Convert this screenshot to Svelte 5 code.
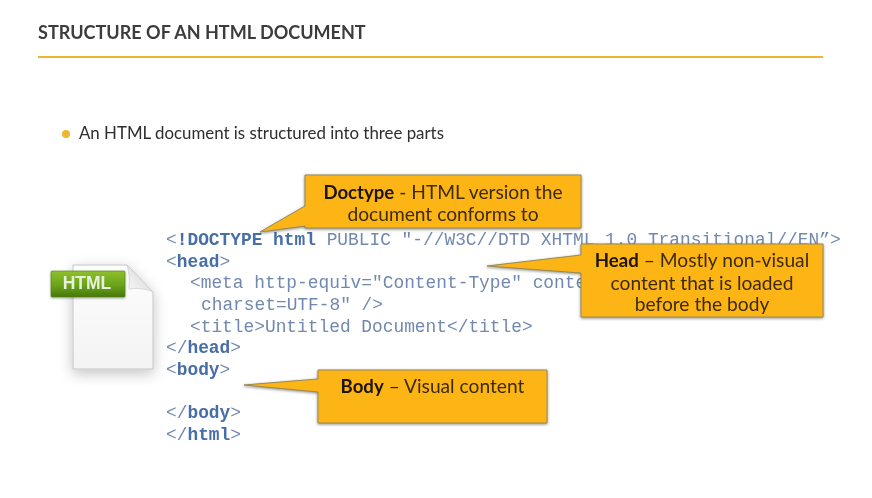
<script>
  const lines = [
    { indent: 0, parts: [['&lt;'], ['!DOCTYPE html', 1], [' PUBLIC "-//W3C//DTD XHTML 1.0 Transitional//EN”&gt;']] },
    { indent: 0, parts: [['&lt;'], ['head', 1], ['&gt;']] },
    { indent: 1, parts: [['&lt;meta http-equiv="Content-Type" content="text/html;']] },
    { indent: 2, parts: [['charset=UTF-8" /&gt;']] },
    { indent: 1, parts: [['&lt;title&gt;Untitled Document&lt;/title&gt;']] },
    { indent: 0, parts: [['&lt;/'], ['head', 1], ['&gt;']] },
    { indent: 0, parts: [['&lt;'], ['body', 1], ['&gt;']] },
    { indent: 0, parts: [[' ']] },
    { indent: 0, parts: [['&lt;/'], ['body', 1], ['&gt;']] },
    { indent: 0, parts: [['&lt;/'], ['html', 1], ['&gt;']] }
  ];
</script>

<div class="slide">
  <header class="head"><h1>STRUCTURE OF AN HTML DOCUMENT</h1></header>
  <ul class="bullets"><li>An HTML document is structured into three parts</li></ul>

  <section class="figure">
    <div class="file">
      <svg width="130" height="135" viewBox="0 0 130 135" aria-hidden="true">
        <defs>
          <linearGradient id="pg" x1="0" y1="0" x2="0" y2="1"><stop offset="0" stop-color="#fdfdfd"/><stop offset="1" stop-color="#f3f3f3"/></linearGradient>
          <linearGradient id="fold" x1="0" y1="1" x2="1" y2="0"><stop offset="0" stop-color="#fafafa"/><stop offset="1" stop-color="#cfcfcf"/></linearGradient>
          <linearGradient id="tag" x1="0" y1="0" x2="0" y2="1"><stop offset="0" stop-color="#8fc02c"/><stop offset=".55" stop-color="#6aa31a"/><stop offset="1" stop-color="#47780c"/></linearGradient>
          <filter id="sh" x="-25%" y="-20%" width="150%" height="145%"><feDropShadow dx="0" dy="4" stdDeviation="7" flood-color="#000" flood-opacity=".24"/></filter>
          <filter id="tsh" x="-10%" y="-20%" width="120%" height="140%"><feDropShadow dx="0" dy="1" stdDeviation="1" flood-color="#000" flood-opacity=".35"/></filter>
        </defs>
        <path d="M33 15H87L113 42V119H33Z" fill="url(#pg)" stroke="#c4c4c4" filter="url(#sh)"/>
        <path d="M87 15L113 42C104 38 96 38 89 39C90 30 89 22 87 15Z" fill="url(#fold)" stroke="#c8c8c8" stroke-width=".6"/>
        <rect x="11" y="21" width="74" height="26" rx="1" fill="url(#tag)" stroke="#4d7f10" stroke-width=".6" filter="url(#tsh)"/>
      </svg>
      <span class="tag">HTML</span>
    </div>

    <pre class="code">{#each lines as line}<div class="line indent{line.indent}">{#each line.parts as part}{#if part[1]}<b>{@html part[0]}</b>{:else}{@html part[0]}{/if}{/each}</div>{/each}</pre>

    <div class="callout doctype">
      <svg class="shape" width="340" height="70" viewBox="0 0 340 70" aria-hidden="true">
        <path d="M50 1H326V54H50V52L5 58L50 32Z" class="fillshape"/>
      </svg>
      <p><b>Doctype</b> - HTML version the document conforms to</p>
    </div>

    <div class="callout headbox">
      <svg class="shape" width="350" height="85" viewBox="0 0 350 85" aria-hidden="true">
        <path d="M100 5H342V78H100V34L6 27L100 16Z" class="fillshape"/>
      </svg>
      <p><b>Head</b> – Mostly non-visual content that is loaded before the body</p>
    </div>

    <div class="callout bodybox">
      <svg class="shape" width="310" height="65" viewBox="0 0 310 65" aria-hidden="true">
        <path d="M79 5H308V58H79V27L5 20L79 14Z" class="fillshape"/>
      </svg>
      <p><b>Body</b> – Visual content</p>
    </div>
  </section>
</div>

<style>
  :global(body) { margin: 0; background: #fff; }
  .slide {
    position: relative;
    width: 872px; height: 498px; overflow: hidden; box-sizing: border-box;
    padding: 0 49px 0 38px; font-family: Lato, "Open Sans", sans-serif; background: #fff;
    filter: blur(0.35px);
  }
  .head { border-bottom: 2px solid #f0b52f; height: 58px; box-sizing: border-box; padding-top: 20px; }
  h1 { margin: 0; font-size: 18.05px; line-height: 24px; font-weight: 700; color: #3c3c3c; }
  .bullets { list-style: none; margin: 64px 0 0; padding: 0 0 0 24px; }
  .bullets li { position: relative; padding-left: 17px; font-size: 16.85px; line-height: 22px; color: #2e2e2e; }
  .bullets li::before {
    content: ""; position: absolute; left: 0; top: 8px; width: 8px; height: 8px;
    border-radius: 50%; background: #f0b52f;
  }
  .figure { display: flex; margin: 0 0 0 -38px; padding-top: 86px; }
  .file { position: absolute; left: 40px; top: 250px; width: 130px; height: 135px; }
  .tag {
    position: absolute; left: 10px; top: 20px; width: 74px; height: 26px; text-align: center;
    font: 700 17.5px/26px "Liberation Sans", sans-serif; color: #e9efdf;
  }
  .code {
    margin: 0 0 0 166px; font: 17.85px/21.67px "Liberation Mono", monospace; color: #7189ae;
    white-space: pre;
  }
  .code b { color: #476ea6; font-weight: 700; }
  .line { height: 21.67px; }
  .indent1 { padding-left: 24px; }
  .indent2 { padding-left: 35px; }
  .callout { position: absolute; font-size: 19.2px; line-height: 22px; color: #3d2a06; text-align: center; }
  .shape { position: absolute; overflow: visible; }
  .fillshape { fill: #fdb515; stroke: #9a8a52; stroke-width: 1; filter: drop-shadow(0 1px 1.5px rgba(0,0,0,.45)); }
  .callout p { position: relative; margin: 0; }
  .callout b { color: #1d1403; font-size: 18.6px; }
  .doctype { left: 305px; top: 175px; width: 276px; height: 53px; }
  .doctype .shape { left: -50px; top: -1px; }
  .doctype p { padding: 6px 10px 0; }
  .headbox { left: 581px; top: 244px; width: 242px; height: 73px; }
  .headbox .shape { left: -100px; top: -5px; }
  .headbox p { padding: 5px 4px 0; line-height: 21.6px; }
  .bodybox { left: 318px; top: 370px; width: 229px; height: 53px; }
  .bodybox .shape { left: -79px; top: -5px; }
  .bodybox p { padding-top: 5px; }
</style>
